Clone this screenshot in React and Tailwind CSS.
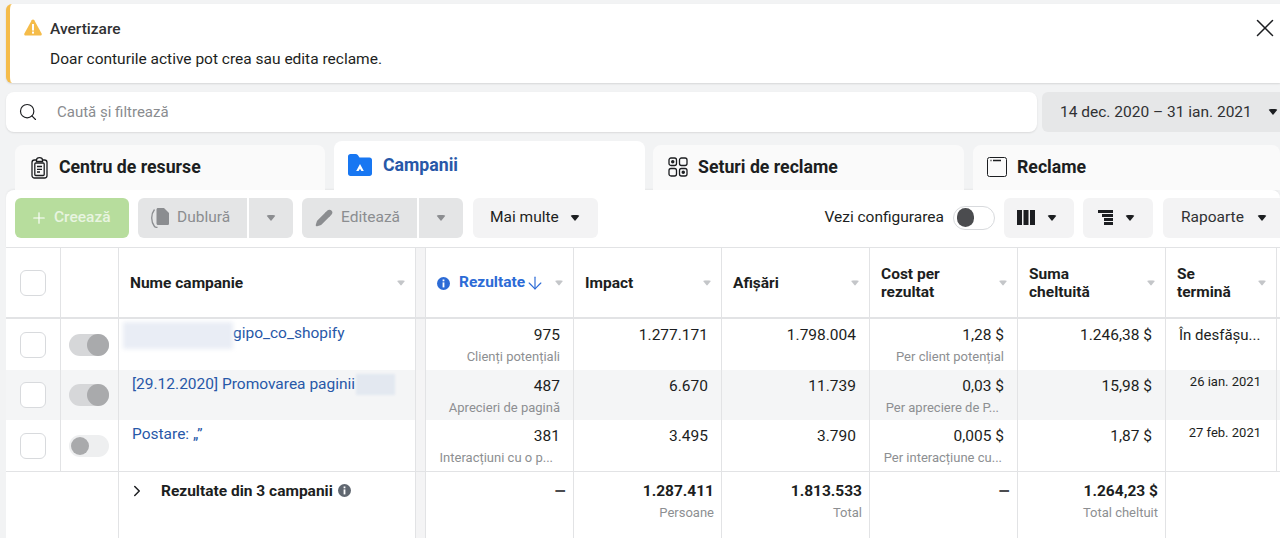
import { Search, X, Plus, ChevronRight, ArrowDown, Pencil } from 'lucide-react'

const COLS = 'grid grid-cols-[54px_58px_297px_10px_148px_148px_148px_148px_148px_111px_1fr]'

function Caret({ className = 'border-t-[#1c1e21]' }) {
  return <span className={`inline-block w-0 h-0 border-x-[5.5px] border-x-transparent border-t-[6px] rounded-sm ${className}`} />
}

function SortCaret() {
  return <Caret className="border-t-[#c4c6c9] scale-90" />
}

function WarnIcon() {
  return (
    <svg width="18" height="17" viewBox="0 0 18 17">
      <path d="M9 0.5c.6 0 1 .3 1.3.8l7.3 13.2c.5 1-.1 2-1.2 2H1.6c-1.1 0-1.7-1-1.2-2L7.7 1.3C8 .8 8.4.5 9 .5z" fill="#f5bc4a" />
      <rect x="8" y="5" width="2" height="6.5" fill="#fff" />
      <rect x="8" y="12.6" width="2" height="2" fill="#fff" />
    </svg>
  )
}

function ClipboardIcon() {
  return (
    <svg width="17" height="22" viewBox="0 0 17 22" fill="none" stroke="#1c1e21" strokeWidth="1.3">
      <rect x="1" y="3" width="15" height="18" rx="2.5" />
      <rect x="3.8" y="6" width="9.4" height="12.5" rx="1" />
      <path d="M5.5 3c0-1.3 1-2.3 3-2.3s3 1 3 2.3v1.5h-6z" fill="#fff" />
      <path d="M6 9.5h5M6 12.3h5M6 15h3" />
    </svg>
  )
}

function FolderIcon() {
  return (
    <svg width="24" height="22" viewBox="0 0 24 22">
      <path d="M0 2.5C0 1 1 0 2.5 0h5c1 0 1.7.4 2.3 1.1L11.5 3.5h10C23 3.5 24 4.5 24 6v13.500c0 1.500-1 2.500-2.500 2.500h-19C1 22 0 21 0 19.500z" fill="#1877f2" />
      <path d="M12 10l3.800 7h-2.400L12 14.800 10.600 17H8.200z" fill="#fff" />
    </svg>
  )
}

function AdSetIcon() {
  return (
    <svg width="20" height="20" viewBox="0 0 20 20" fill="none" stroke="#1c1e21" strokeWidth="1.3">
      <rect x="1" y="1" width="7.5" height="7.5" rx="2" />
      <rect x="11.5" y="1" width="7.5" height="7.5" rx="2" />
      <rect x="1" y="11.5" width="7.5" height="7.5" rx="2" />
      <rect x="11.5" y="11.5" width="7.5" height="7.5" rx="2" />
      <circle cx="4.75" cy="4.75" r="1.1" fill="#1c1e21" />
      <circle cx="15.25" cy="15.25" r="1.1" fill="#1c1e21" />
    </svg>
  )
}

function AdIcon() {
  return (
    <svg width="20" height="20" viewBox="0 0 20 20" fill="none" stroke="#1c1e21" strokeWidth="1">
      <rect x="0.5" y="0.5" width="19" height="19" rx="2" />
      <path d="M3.5 3.5h1M6 3.5h8" strokeWidth="1.3" />
    </svg>
  )
}

function DuplicateIcon() {
  return (
    <svg width="18" height="20" viewBox="0 0 18 20" fill="#8b8d90">
      <path d="M7 0h6l5 5v10.5c0 1-.7 1.5-1.5 1.5H7c-1 0-1.5-.7-1.5-1.5V1.5C5.5.7 6 0 7 0z" />
      <path d="M3.5 1.5C1.5 4 .7 7 .7 10s.8 6 2.8 8.5c.5.6 1.2.8 2 .8h1" fill="none" stroke="#8b8d90" strokeWidth="1.3" />
    </svg>
  )
}

function ColumnsIcon() {
  return (
    <svg width="18" height="15" viewBox="0 0 18 15" fill="#1c1e21">
      <rect x="0" y="0" width="5" height="15" />
      <rect x="6.5" y="0" width="5" height="15" />
      <rect x="13" y="0" width="5" height="15" />
    </svg>
  )
}

function BreakdownIcon() {
  return (
    <svg width="15" height="15" viewBox="0 0 15 15" fill="#1c1e21">
      <rect x="0" y="0" width="15" height="3" />
      <rect x="4" y="4" width="11" height="3" />
      <rect x="6" y="8" width="9" height="3" />
      <rect x="6" y="12" width="9" height="3" />
    </svg>
  )
}

function InfoDot({ color }) {
  return (
    <svg width="13" height="13" viewBox="0 0 13 13">
      <circle cx="6.5" cy="6.5" r="6.5" fill={color} />
      <rect x="5.6" y="2.5" width="1.8" height="1.8" fill="#fff" />
      <rect x="5.6" y="5.4" width="1.8" height="5" fill="#fff" />
    </svg>
  )
}

function Toggle({ on }) {
  return (
    <div className={`w-10 h-[22px] rounded-full flex items-center ${on ? 'bg-[#d6d7d9] justify-end' : 'bg-[#eeeff0] justify-start pl-[2px]'}`}>
      <div className={`rounded-full bg-[#a9aaac] ${on ? 'w-[22px] h-[22px]' : 'w-[18px] h-[18px]'}`} />
    </div>
  )
}

function Check() {
  return <div className="w-[26px] h-[26px] rounded-md border border-[#d8dadd] bg-white" />
}

function Tab({ icon, label, active, className = '' }) {
  if (active) {
    return (
      <div className={`h-[49px] -mt-1 rounded-t-lg bg-white flex items-start pt-[13px] gap-[11px] shrink-0 ${className}`}>
        {icon}
        <span className="text-[17.7px] font-bold text-[#2858a8] leading-6 -mt-[1px]">{label}</span>
      </div>
    )
  }
  return (
    <div className={`h-[45px] rounded-t-lg bg-[#fafafa] flex items-start pt-[10px] gap-[10px] ${className}`}>
      <span className="mt-[2px]">{icon}</span>
      <span className="text-[17.7px] font-bold text-[#1c1e21] leading-6">{label}</span>
    </div>
  )
}

function SplitButton({ icon, label, mainWidth }) {
  return (
    <div className="flex gap-[2px] h-10">
      <div className={`rounded-l-md bg-[#e4e5e6] flex items-center gap-[8px] pl-[13px] ${mainWidth}`}>
        {icon}
        <span className="text-[15.5px] text-[#8b8d90] pt-[1px]">{label}</span>
      </div>
      <div className="w-11 rounded-r-md bg-[#e4e5e6] flex items-center justify-center">
        <Caret className="border-t-[#8b8d90]" />
      </div>
    </div>
  )
}

function IconMenu({ children, pad }) {
  return (
    <div className={`w-[70px] h-10 rounded-md bg-[#f3f3f4] flex items-center gap-[12px] ${pad}`}>
      {children}
      <Caret />
    </div>
  )
}

function HeadCell({ children }) {
  return (
    <div className="border-l border-[#e2e3e5] pl-[11px] pr-[9px] pt-[1px] flex items-center justify-between text-[15.5px] leading-[18px] font-bold text-[#1c1e21]">
      <div>{children}</div>
      <SortCaret />
    </div>
  )
}

function NumCell({ value, sub, subClass = '' }) {
  return (
    <div className="border-l border-[#e2e3e5] pr-[13px] pt-[6px] text-right overflow-hidden">
      <div className="text-[15.5px] leading-5 text-[#1c1e21]">{value}</div>
      {sub && <div className={`text-[13px] leading-4 mt-[4px] text-[#8d8f92] whitespace-nowrap ${subClass}`}>{sub}</div>}
    </div>
  )
}

function TotalCell({ value, sub, dash }) {
  return (
    <div className="border-l border-[#e2e3e5] pr-[7px] pt-[9px] text-right">
      <div className={`leading-5 font-bold ${dash ? 'text-[19px] text-[#4b4c4f]' : 'text-[15.5px] text-[#1c1e21]'}`}>{value}</div>
      {sub && <div className="text-[13px] leading-4 mt-[4px] text-[#8d8f92]">{sub}</div>}
    </div>
  )
}

const ROWS = [
  {
    name: (
      <div className="flex items-start -ml-[9px]">
        <span className="w-[110px] h-[27px] mt-[-1px] bg-[#e9edf5] blur-[2px] shrink-0" />
        <span>gipo_co_shopify</span>
      </div>
    ),
    on: true,
    h: 'h-[51px]',
    cells: [
      ['975', 'Clienți potențiali'],
      ['1.277.171'],
      ['1.798.004'],
      ['1,28 $', 'Per client potențial'],
      ['1.246,38 $'],
    ],
    end: <div className="pl-[13px] pt-[6px] text-[15px] leading-5 text-[#1c1e21] whitespace-nowrap">În desfășu...</div>,
  },
  {
    name: (
      <div className="flex items-start">
        <span>[29.12.2020] Promovarea paginii</span>
        <span className="w-[39px] h-[21px] bg-[#e3e8f0] blur-[1px] ml-[1px] shrink-0" />
      </div>
    ),
    on: true,
    shaded: true,
    h: 'h-[50px]',
    cells: [
      ['487', 'Aprecieri de pagină'],
      ['6.670'],
      ['11.739'],
      ['0,03 $', 'Per apreciere de P...', 'mr-[5px]'],
      ['15,98 $'],
    ],
    end: <div className="pr-[15px] pt-[2px] text-[13px] leading-5 text-right text-[#1c1e21]">26 ian. 2021</div>,
  },
  {
    name: <div>Postare: „”</div>,
    h: 'h-[51px]',
    last: true,
    cells: [
      ['381', 'Interacțiuni cu o p...', 'mr-[7px]'],
      ['3.495'],
      ['3.790'],
      ['0,005 $', 'Per interacțiune cu...', 'mr-[2px]'],
      ['1,87 $'],
    ],
    end: <div className="pr-[15px] pt-[2px] text-[13px] leading-5 text-right text-[#1c1e21]">27 feb. 2021</div>,
  },
]

export default function App() {
  return (
    <div className="w-[1280px] h-[538px] overflow-hidden bg-[#f2f3f4] pt-1 pl-[6px] font-['Roboto',sans-serif]">
      <div className="h-[79px] rounded-l-md border-l-[4px] border-[#f5bc4a] bg-white shadow-[0_1px_2px_rgba(0,0,0,0.12)] flex pl-[14px] pt-[15px]">
        <WarnIcon />
        <div className="ml-[8px] grow">
          <div className="text-[15.5px] leading-5 font-medium text-[#303133]">Avertizare</div>
          <div className="text-[15.5px] leading-5 mt-[10px] text-[#1c1e21]">Doar conturile active pot crea sau edita reclame.</div>
        </div>
        <X size={30} strokeWidth={1.2} className="text-[#1c1e21] -mt-[6px]" />
      </div>

      <div className="flex gap-[5px] mt-[9px] h-10">
        <div className="w-[1031px] rounded-lg bg-white shadow-[0_1px_2px_rgba(0,0,0,0.1)] flex items-center pl-[12px] gap-[19px]">
          <Search size={20} strokeWidth={1.4} className="text-[#1c1e21]" />
          <span className="text-[15px] text-[#8a8c8f]">Caută și filtrează</span>
        </div>
        <div className="grow rounded-l-md bg-[#e6e7e8] flex items-center pl-[18px] gap-[16px] text-[15.5px] text-[#303133] whitespace-nowrap">
          <span className="pt-[2px]">14 dec. 2020 – 31 ian. 2021</span>
          <Caret />
        </div>
      </div>

      <div className="flex pl-[9px] mt-[13px] h-[45px]">
        <Tab icon={<ClipboardIcon />} label="Centru de resurse" className="w-[310px] pl-[16px] !gap-[11px] shrink-0" />
        <Tab icon={<FolderIcon />} label="Campanii" active className="w-[311px] ml-[9px] pl-[14px]" />
        <Tab icon={<AdSetIcon />} label="Seturi de reclame" className="w-[311px] ml-[8px] pl-[15px] shrink-0" />
        <Tab icon={<AdIcon />} label="Reclame" className="grow ml-[9px] pl-[14px]" />
      </div>

      <div className="h-[58px] rounded-t-lg bg-white border-b border-[#e2e3e5] shadow-[0_-1px_2px_rgba(0,0,0,0.05)] flex items-center pl-[9px] pb-[2px]">
        <div className="w-[114px] h-10 rounded-md bg-[#b7dd9d] flex items-center pl-[15px] gap-[6px] text-white">
          <Plus size={18} strokeWidth={1.5} />
          <span className="text-[15.5px] font-medium text-white/70 pt-[1px]">Creează</span>
        </div>
        <div className="ml-[9px]">
          <SplitButton icon={<DuplicateIcon />} label="Dublură" mainWidth="w-[109px]" />
        </div>
        <div className="ml-[9px]">
          <SplitButton icon={<Pencil size={18} fill="#8b8d90" stroke="#8b8d90" />} label="Editează" mainWidth="w-[115px]" />
        </div>
        <div className="ml-[10px] w-[125px] h-10 rounded-md bg-[#f3f3f4] flex items-center pl-[17px] gap-[11px] text-[15.5px] text-[#1c1e21]">
          <span className="pt-[1px]">Mai multe</span>
          <Caret />
        </div>
        <div className="ml-auto flex items-center">
          <span className="text-[15.5px] text-[#1c1e21] pt-[1px]">Vezi configurarea</span>
          <div className="ml-[9px] w-[42px] h-[24px] rounded-full border border-[#d8dadd] bg-white flex items-center pl-[3px]">
            <div className="w-[17px] h-[19px] rounded-full bg-[#4b4c4f]" />
          </div>
          <div className="ml-[9px]"><IconMenu pad="pl-[13px]"><ColumnsIcon /></IconMenu></div>
          <div className="ml-[9px]"><IconMenu pad="pl-[15px]"><BreakdownIcon /></IconMenu></div>
          <div className="ml-[10px] w-[117px] h-10 rounded-l-md bg-[#f3f3f4] flex items-center pl-[18px] gap-[13px] text-[15.5px] text-[#303133]">
            <span className="pt-[1px]">Rapoarte</span>
            <Caret />
          </div>
        </div>
      </div>

      <div className="bg-white">
        <div className={`${COLS} h-[71px] border-b-2 border-[#e2e3e5]`}>
          <div className="flex items-center justify-center"><Check /></div>
          <div className="border-l border-[#e2e3e5]" />
          <HeadCell>Nume campanie</HeadCell>
          <div className="bg-[#f4f4f5] border-l border-[#e2e3e5]" />
          <div className="border-l border-[#e2e3e5] pl-[11px] pr-[9px] pt-[1px] flex items-center justify-between text-[15.5px] font-bold text-[#2c6bd6]">
            <div className="flex items-center gap-[9px]">
              <InfoDot color="#2c6bd6" />
              <span className="flex items-center">Rezultate<ArrowDown size={20} strokeWidth={1.4} /></span>
            </div>
            <SortCaret />
          </div>
          <HeadCell>Impact</HeadCell>
          <HeadCell>Afișări</HeadCell>
          <HeadCell>Cost per<br />rezultat</HeadCell>
          <HeadCell>Suma<br />cheltuită</HeadCell>
          <HeadCell>Se<br />termină</HeadCell>
          <div className="border-l border-[#e2e3e5]" />
        </div>

        {ROWS.map((row, i) => (
          <div key={i} className={`${COLS} ${row.h} ${row.shaded ? 'bg-[#f4f5f6]' : ''}`}>
            <div className="flex items-center justify-center"><Check /></div>
            <div className="border-l border-[#e2e3e5] flex items-center justify-center pr-[2px]">
              <Toggle on={row.on} />
            </div>
            <div className="border-l border-[#e2e3e5] pl-[13px] pt-[4px] text-[15.5px] leading-5 text-[#2858a8] whitespace-nowrap">
              {row.name}
            </div>
            <div className="bg-[#f4f4f5] border-l border-[#e2e3e5]" />
            {row.cells.map((c, j) => <NumCell key={j} value={c[0]} sub={c[1]} subClass={c[2]} />)}
            <div className={`border-l border-[#e2e3e5] ${row.last ? 'pt-[1px]' : ''}`}>{row.end}</div>
            <div className="border-l border-[#e2e3e5]" />
          </div>
        ))}

        <div className={`${COLS} h-[67px] border-t border-[#e2e3e5]`}>
          <div />
          <div />
          <div className="border-l border-[#e2e3e5] pl-[9px] pt-[9px] flex items-start text-[15.5px] leading-5 font-bold text-[#1c1e21]">
            <ChevronRight size={18} strokeWidth={2} className="mt-[1px]" />
            <span className="ml-[15px]">Rezultate din 3 campanii</span>
            <span className="ml-[5px] mt-[3px]"><InfoDot color="#606770" /></span>
          </div>
          <div className="bg-[#f4f4f5] border-l border-[#e2e3e5]" />
          <TotalCell value="–" dash />
          <TotalCell value="1.287.411" sub="Persoane" />
          <TotalCell value="1.813.533" sub="Total" />
          <TotalCell value="–" dash />
          <TotalCell value="1.264,23 $" sub="Total cheltuit" />
          <div className="border-l border-[#e2e3e5]" />
          <div />
        </div>
      </div>
    </div>
  )
}
